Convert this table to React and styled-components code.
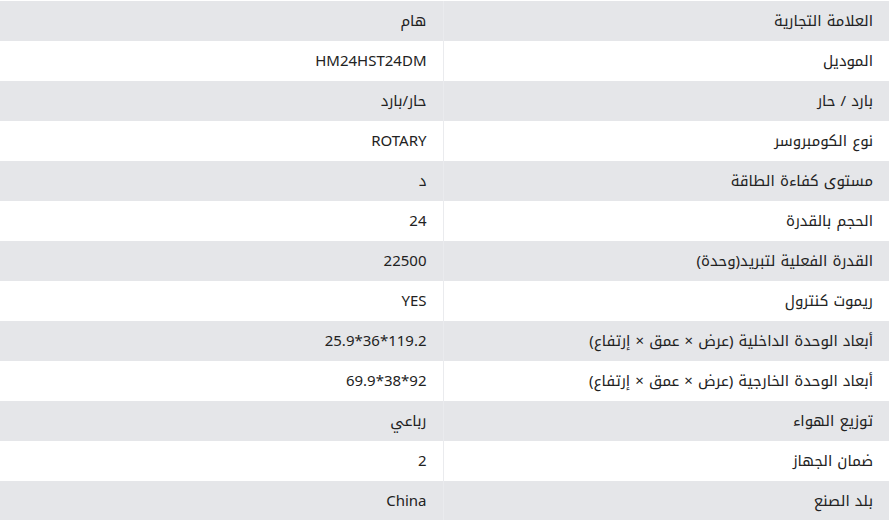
import React from "react"
import styled, { createGlobalStyle } from "styled-components"

const GlobalStyle = createGlobalStyle`
  body {
    margin: 0;
    background: #ffffff;
    font-family: "Noto Kufi Arabic", "Noto Sans Arabic", "DejaVu Sans", sans-serif;
  }
`

const Wrapper = styled.div`
  width: 889px;
  padding-top: 1px;
  box-sizing: border-box;
  direction: rtl;
`

const SpecTable = styled.table`
  width: 100%;
  border-collapse: collapse;
  table-layout: fixed;
`

const Row = styled.tr`
  height: 40px;
  background: ${p => (p.$shaded ? "#e5e6e9" : "#ffffff")};
`

const Label = styled.td`
  box-sizing: border-box;
  width: 446px;
  padding: 0 16px 0 8px;
  font-size: 15px;
  color: #222222;
  text-align: right;
  vertical-align: middle;
  border-left: 1px solid #eaebee;
`

const Value = styled.td`
  box-sizing: border-box;
  padding: 0 16px 0 8px;
  font-size: 15px;
  color: #222222;
  text-align: right;
  vertical-align: middle;
`

const specs = [
  ["العلامة التجارية", "هام"],
  ["الموديل", "HM24HST24DM"],
  ["بارد / حار", "حار/بارد"],
  ["نوع الكومبروسر", "ROTARY"],
  ["مستوى كفاءة الطاقة", "د"],
  ["الحجم بالقدرة", "24"],
  ["القدرة الفعلية لتبريد(وحدة)", "22500"],
  ["ريموت كنترول", "YES"],
  ["أبعاد الوحدة الداخلية (عرض × عمق × إرتفاع)", "25.9*36*119.2"],
  ["أبعاد الوحدة الخارجية (عرض × عمق × إرتفاع)", "69.9*38*92"],
  ["توزيع الهواء", "رباعي"],
  ["ضمان الجهاز", "2"],
  ["بلد الصنع", "China"],
]

const App = () => {
  return (
    <>
      <GlobalStyle />
      <Wrapper>
        <SpecTable>
          <tbody>
            {specs.map(([label, value], i) => (
              <Row key={label} $shaded={i % 2 === 0}>
                <Label>{label}</Label>
                <Value dir="ltr">{value}</Value>
              </Row>
            ))}
          </tbody>
        </SpecTable>
      </Wrapper>
    </>
  )
}

export default App
